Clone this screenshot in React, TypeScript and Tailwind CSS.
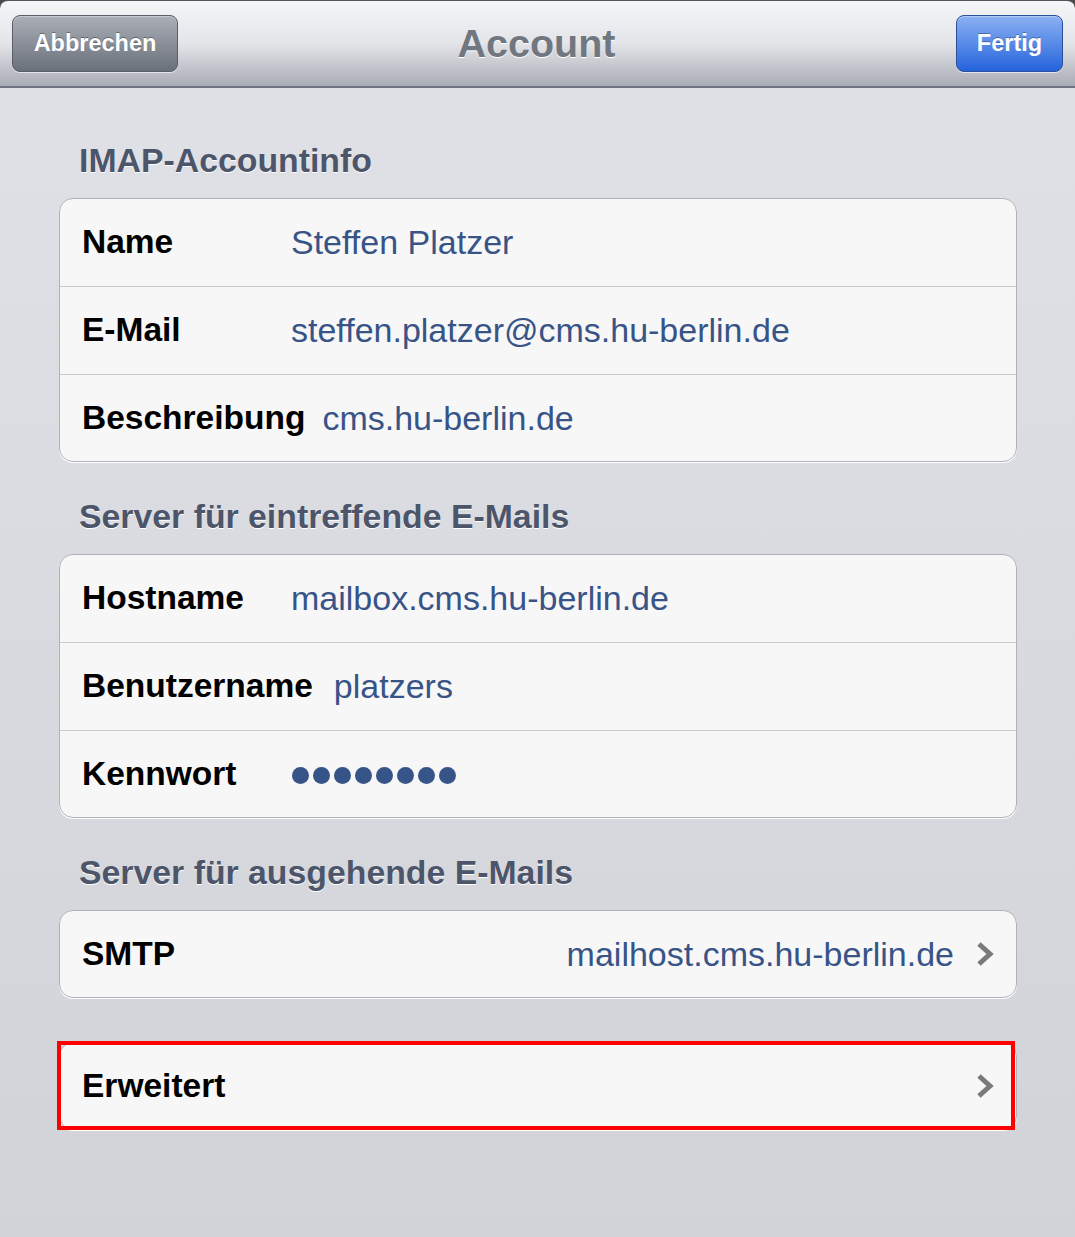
import React from "react";

function Chevron() {
  return (
    <svg width="18" height="26" viewBox="0 0 18 26" className="shrink-0">
      <polyline points="3,3 14,13 3,23" fill="none" stroke="#7a7a7a" strokeWidth="5" strokeLinejoin="miter" />
    </svg>
  );
}

function Row({ label, value, first, h = "h-[88px]" }: { label: string; value?: React.ReactNode; first?: boolean; h?: string }) {
  return (
    <div className={h + " flex items-center pl-[22px] " + (first ? "" : "border-t border-[#c9cacd]")}>
      <div className="min-w-[191px] mr-[18px] text-[33.5px] font-bold text-black">{label}</div>
      <div className="text-[34px] text-[#385487]">{value}</div>
    </div>
  );
}

function Header({ children }: { children: React.ReactNode }) {
  return (
    <div className="h-[92px] pt-[16px] flex items-center pl-[20px] text-[33.8px] font-bold text-[#4c5569] [text-shadow:0_1px_0_#ffffff]">
      {children}
    </div>
  );
}

const box = "rounded-[14px] border border-[#b0b2b7] bg-[#f7f7f7] shadow-[0_1px_0_#ffffff]";

export default function App() {
  return (
    <div className="w-[1075px] h-[1237px] overflow-hidden bg-gradient-to-b from-[#e0e2e7] to-[#d2d3d8] font-['Liberation_Sans',Arial,sans-serif]">
      <div className="bg-[#4a4a4a]">
        <div className="h-[88px] rounded-t-[8px] border-t border-[#555] border-b-2 border-b-[#6d7380] bg-gradient-to-b from-[#f4f5f7] via-[#e4e5e9] to-[#a9acb6] grid grid-cols-[1fr_auto_1fr] items-center px-[12px]">
          <div className="flex">
            <div className="h-[57px] w-[166px] rounded-[8px] border border-[#585d66] bg-gradient-to-b from-[#abb0b8] to-[#6a707a] shadow-[inset_0_1px_0_rgba(255,255,255,0.35),0_1px_0_rgba(255,255,255,0.6)] flex items-center justify-center text-white text-[23.5px] font-bold [text-shadow:0_-1px_0_rgba(0,0,0,0.35)]">
              Abbrechen
            </div>
          </div>
          <div className="text-[39.5px] font-bold text-[#717780] [text-shadow:0_1px_0_#ffffff] -ml-[2px]">Account</div>
          <div className="flex justify-end">
            <div className="h-[57px] w-[107px] rounded-[8px] border border-[#2b4f99] bg-gradient-to-b from-[#8ab0f1] to-[#2463dc] shadow-[inset_0_1px_0_rgba(255,255,255,0.35),0_1px_0_rgba(255,255,255,0.6)] flex items-center justify-center text-white text-[23.5px] font-bold [text-shadow:0_-1px_0_rgba(0,0,0,0.3)]">
              Fertig
            </div>
          </div>
        </div>
      </div>

      <div className="pl-[59px] pr-[58px] pt-[18px]">
        <Header>IMAP-Accountinfo</Header>
        <div className={box}>
          <Row first h="h-[87px]" label="Name" value="Steffen Platzer" />
          <Row label="E-Mail" value="steffen.platzer@cms.hu-berlin.de" />
          <div className="h-[87px] flex items-center pl-[22px] border-t border-[#c9cacd]">
            <div className="mr-[17px] text-[33.5px] font-bold text-black">Beschreibung</div>
            <div className="text-[34px] text-[#385487]">cms.hu-berlin.de</div>
          </div>
        </div>

        <Header>Server für eintreffende E-Mails</Header>
        <div className={box}>
          <Row first h="h-[87px]" label="Hostname" value="mailbox.cms.hu-berlin.de" />
          <div className="h-[88px] flex items-center pl-[22px] border-t border-[#c9cacd]">
            <div className="mr-[21px] text-[33.5px] font-bold text-black">Benutzername</div>
            <div className="text-[34px] text-[#385487]">platzers</div>
          </div>
          <div className="h-[87px] flex items-center pl-[22px] border-t border-[#c9cacd]">
            <div className="min-w-[191px] mr-[19px] text-[33.5px] font-bold text-black">Kennwort</div>
            <div className="flex gap-[4px] pt-[2px]">
              {Array.from({ length: 8 }).map((_, i) => (
                <span key={i} className="w-[17px] h-[17px] rounded-full bg-[#365487]" />
              ))}
            </div>
          </div>
        </div>

        <Header>Server für ausgehende E-Mails</Header>
        <div className={box}>
          <div className="h-[86px] flex items-center pl-[22px] pr-[22px]">
            <div className="text-[33.5px] font-bold text-black">SMTP</div>
            <div className="ml-auto mr-[22px] text-[34px] text-[#385487]">mailhost.cms.hu-berlin.de</div>
            <Chevron />
          </div>
        </div>

        <div className="relative mt-[44px]">
          <div className={box}>
            <div className="h-[86px] flex items-center pl-[22px] pr-[22px]">
              <div className="text-[33.5px] font-bold text-black">Erweitert</div>
              <div className="ml-auto" />
              <Chevron />
            </div>
          </div>
          <div className="absolute -left-[2px] -top-[1px] w-[958px] h-[89px] border-[4px] border-[#ff0000]" />
        </div>
      </div>
    </div>
  );
}
